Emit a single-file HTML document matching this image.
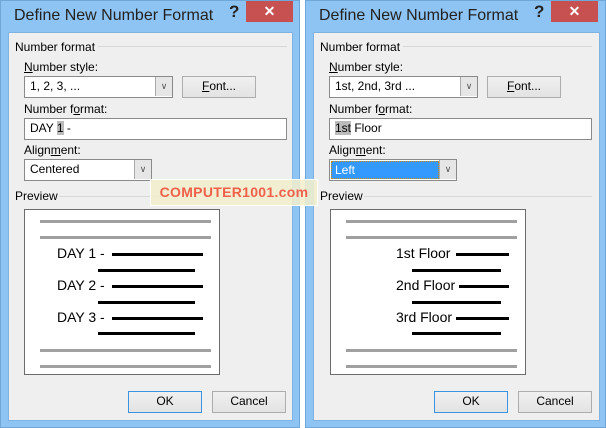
<!DOCTYPE html><html><head><style>
*{margin:0;padding:0;box-sizing:border-box}
body{width:606px;height:428px;background:#fff;position:relative;overflow:hidden;font-family:"Liberation Sans",sans-serif;font-size:12px;color:#000}
.a{position:absolute}
.dlg{position:absolute;top:0;width:300px;height:428px;background:#8ec4f4;border:1px solid #6fa8d8}
.cl{position:absolute;left:7px;top:31px;width:285px;height:389px;background:#efefef;border:1px solid #7eb2e0}
.title{position:absolute;left:13px;top:6px;font-size:16px;color:#222}
.q{position:absolute;left:228px;top:1px;font-size:17px;font-weight:bold;color:#222}
.x{position:absolute;left:245px;top:0;width:47px;height:21px;background:#c75050;color:#fff;font-weight:bold;font-size:14px;text-align:center;line-height:20px}
.box{position:absolute;background:#fff;border:1px solid #8a8a8a;padding-left:5px;line-height:19px}
.dd{position:absolute;top:0;right:0;width:17px;height:19px;background:#e6e6e6;border-left:1px solid #aaa;text-align:center;font-size:9px;color:#555;line-height:19px}
.btn{position:absolute;background:linear-gradient(#f0f0f0,#e3e3e3);border:1px solid #adadad;text-align:center;line-height:19px}
.hl{position:absolute;height:1px;background:#d8d8d8}
.pv{position:absolute;background:#fff;border:1px solid #6c6c6c}
.g{position:absolute;height:3px;background:#a0a0a0}
.k{position:absolute;height:3px;background:#000}
.pt{position:absolute;font-size:14px}
u{text-decoration:underline}
</style></head><body>
<div class="dlg" style="left:0"><div class="cl"></div>
<div class="title">Define New Number Format</div><div class="q">?</div><div class="x">✕</div>
<div class="a" style="left:14px;top:39px">Number format</div><div class="hl" style="left:97px;top:45px;width:189px"></div>
<div class="a" style="left:23px;top:59px"><u>N</u>umber style:</div>
<div class="box" style="left:23px;top:75px;width:149px;height:22px">1, 2, 3, ...<div class="dd">&#8744;</div></div>
<div class="btn" style="left:181px;top:75px;width:74px;height:22px"><u>F</u>ont...</div>
<div class="a" style="left:23px;top:101px">Number f<u>o</u>rmat:</div>
<div class="box" style="left:23px;top:117px;width:263px;height:22px">DAY <span style="background:#bbb">1</span> -</div>
<div class="a" style="left:23px;top:142px">Align<u>m</u>ent:</div>
<div class="box" style="left:23px;top:158px;width:128px;height:22px">Centered<div class="dd">&#8744;</div></div>
<div class="a" style="left:14px;top:188px">Preview</div><div class="hl" style="left:58px;top:195px;width:228px"></div>
<div class="pv" style="left:23px;top:208px;width:196px;height:166px"></div>
<div class="g" style="left:39px;top:219px;width:171px"></div><div class="g" style="left:39px;top:235px;width:171px"></div>
<div class="pt" style="left:56px;top:244px">DAY 1 -</div><div class="k" style="left:111px;top:252px;width:91px"></div><div class="k" style="left:97px;top:268px;width:97px"></div>
<div class="pt" style="left:56px;top:276px">DAY 2 -</div><div class="k" style="left:111px;top:284px;width:91px"></div><div class="k" style="left:97px;top:300px;width:97px"></div>
<div class="pt" style="left:56px;top:308px">DAY 3 -</div><div class="k" style="left:111px;top:316px;width:91px"></div><div class="k" style="left:97px;top:331px;width:97px"></div>
<div class="g" style="left:39px;top:348px;width:171px"></div><div class="g" style="left:39px;top:364px;width:171px"></div>
<div class="btn" style="left:127px;top:390px;width:74px;height:22px;border-color:#3c94e0">OK</div>
<div class="btn" style="left:211px;top:390px;width:74px;height:22px">Cancel</div>
</div>
<div class="dlg" style="left:305px;width:301px"><div class="cl" style="width:287px"></div>
<div class="title">Define New Number Format</div><div class="q">?</div><div class="x">✕</div>
<div class="a" style="left:14px;top:39px">Number format</div><div class="hl" style="left:97px;top:45px;width:189px"></div>
<div class="a" style="left:23px;top:59px"><u>N</u>umber style:</div>
<div class="box" style="left:23px;top:75px;width:149px;height:22px">1st, 2nd, 3rd ...<div class="dd">&#8744;</div></div>
<div class="btn" style="left:181px;top:75px;width:74px;height:22px"><u>F</u>ont...</div>
<div class="a" style="left:23px;top:101px">Number f<u>o</u>rmat:</div>
<div class="box" style="left:23px;top:117px;width:263px;height:22px"><span style="background:#bbb">1st</span> Floor</div>
<div class="a" style="left:23px;top:142px">Align<u>m</u>ent:</div>
<div class="box" style="left:23px;top:158px;width:128px;height:22px;padding:1px"><div style="background:#3399ff;color:#fff;width:108px;height:18px;line-height:17px;padding-left:3px;border:1px dotted #c80">Left</div><div class="dd">&#8744;</div></div>
<div class="a" style="left:14px;top:188px">Preview</div><div class="hl" style="left:58px;top:195px;width:228px"></div>
<div class="pv" style="left:24px;top:208px;width:196px;height:166px"></div>
<div class="g" style="left:40px;top:219px;width:171px"></div><div class="g" style="left:40px;top:235px;width:171px"></div>
<div class="pt" style="left:90px;top:244px">1st Floor</div><div class="k" style="left:150px;top:252px;width:53px"></div><div class="k" style="left:106px;top:268px;width:89px"></div>
<div class="pt" style="left:90px;top:276px">2nd Floor</div><div class="k" style="left:153px;top:284px;width:50px"></div><div class="k" style="left:106px;top:300px;width:89px"></div>
<div class="pt" style="left:90px;top:308px">3rd Floor</div><div class="k" style="left:150px;top:316px;width:53px"></div><div class="k" style="left:106px;top:331px;width:89px"></div>
<div class="g" style="left:40px;top:348px;width:171px"></div><div class="g" style="left:40px;top:364px;width:171px"></div>
<div class="btn" style="left:128px;top:390px;width:74px;height:22px;border-color:#3c94e0">OK</div>
<div class="btn" style="left:212px;top:390px;width:74px;height:22px">Cancel</div>
</div>
<div class="a" style="left:150px;top:179px;width:168px;height:27px;background:rgba(242,238,205,0.88);border:1px solid #fff;color:#f0604a;font-size:14px;font-weight:bold;line-height:25px;text-align:center;letter-spacing:0.3px">COMPUTER1001.com</div>
</body></html>
